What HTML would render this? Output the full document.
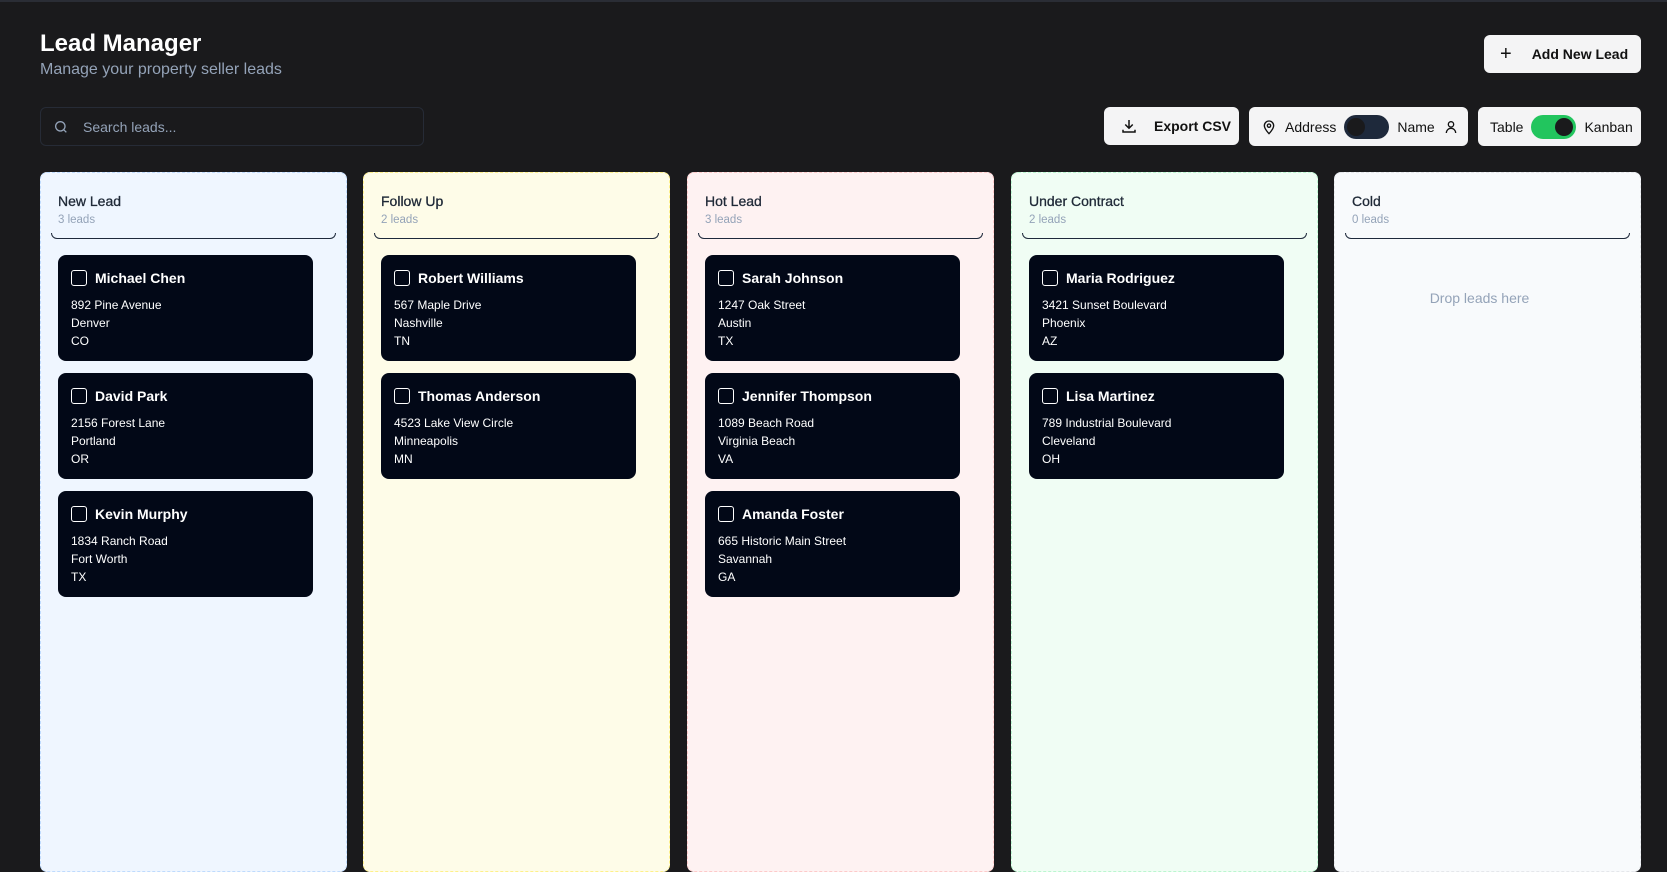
<!DOCTYPE html>
<html><head><meta charset="utf-8"><style>
*{box-sizing:border-box;margin:0;padding:0}
body{width:1667px;height:815px;overflow:hidden;background:#1a1a1c;font-family:"Liberation Sans",sans-serif;position:relative}
.topline{position:absolute;left:0;right:0;top:0;height:2px;background:#2a2d35}
h1{position:absolute;left:40px;top:30px;font-size:24px;color:#fff;font-weight:bold}
.sub{position:absolute;left:40px;top:61px;font-size:16px;color:#94a3b8}
.btn{position:absolute;background:#f4f4f5;border-radius:6px;display:flex;align-items:center;font-size:14px;color:#111}
.search{position:absolute;left:40px;top:107px;width:384px;height:39px;border:1px solid #262b36;border-radius:6px;display:flex;align-items:center;color:#94a3b8;font-size:14px}
.col{position:absolute;top:172px;width:307px;height:700px;border:1px dashed;border-radius:7px}
.ch{position:absolute;left:17px;top:20px;font-size:14px;color:#1f2937;-webkit-text-stroke:0.3px #1f2937}
.cc{position:absolute;left:17px;top:41px;font-size:11.5px;color:#94a3b8}
.dv{position:absolute;left:10px;right:10px;top:52px;height:14px;border-bottom:1px solid #1e293b;border-left:1px solid #1e293b;border-right:1px solid #1e293b;border-radius:0 0 6px 6px;border-top:none;clip-path:inset(8px 0 0 0)}
.card{position:absolute;left:17px;width:255px;height:106px;background:#020817;border-radius:8px;color:#fff}
.cb{position:absolute;left:13px;top:15px;width:16px;height:16px;border:1.5px solid #fff;border-radius:3px}
.nm{position:absolute;left:37px;top:15px;font-size:14px;font-weight:bold}
.ad{position:absolute;left:13px;top:41px;font-size:12px;line-height:18px}
.tg{display:inline-block;width:45px;height:24px;border-radius:12px;position:relative;margin:0 8px}
.tg i{position:absolute;top:3px;width:18px;height:18px;border-radius:50%;background:#1a1a1c}
</style></head><body>
<div class="topline"></div>
<h1>Lead Manager</h1>
<div class="sub">Manage your property seller leads</div>
<div class="btn" style="left:1484px;top:35px;width:157px;height:38px;font-weight:bold;padding-left:16px"><span style="font-size:20px;font-weight:normal;margin-right:20px">+</span>Add New Lead</div>
<div class="search"><svg width="16" height="16" viewBox="0 0 24 24" fill="none" stroke="#94a3b8" stroke-width="2" style="margin:0 14px 0 12px"><circle cx="11" cy="11" r="7"/><path d="M20 20l-4-4"/></svg>Search leads...</div>
<div class="btn" style="left:1104px;top:107px;width:135px;height:38px;font-weight:bold;padding-left:16px"><svg width="18" height="18" viewBox="0 0 24 24" fill="none" stroke="#111" stroke-width="2" style="margin-right:16px"><path d="M12 4v11M7 10l5 5 5-5M4 17v3h16v-3"/></svg>Export CSV</div>
<div class="btn" style="left:1249px;top:107px;width:219px;height:39px;padding-left:12px"><svg width="16" height="16" viewBox="0 0 24 24" fill="none" stroke="#111" stroke-width="2" style="margin-right:8px"><path d="M12 22s7-7 7-12a7 7 0 0 0-14 0c0 5 7 12 7 12z"/><circle cx="12" cy="10" r="2.5"/></svg>Address<span class="tg" style="background:#1e293b"><i style="left:3px"></i></span>Name<svg width="16" height="16" viewBox="0 0 24 24" fill="none" stroke="#111" stroke-width="2" style="margin-left:8px"><circle cx="12" cy="8" r="4"/><path d="M5 21a7 7 0 0 1 14 0"/></svg></div>
<div class="btn" style="left:1478px;top:107px;width:163px;height:39px;padding-left:12px">Table<span class="tg" style="background:#22c55e"><i style="right:3px"></i></span>Kanban</div>

<div class="col" style="left:40px;background:#eff6ff;border-color:#bfdbfe">
<div class="ch">New Lead</div><div class="cc">3 leads</div><div class="dv"></div>
<div class="card" style="top:82px"><div class="cb"></div><div class="nm">Michael Chen</div><div class="ad">892 Pine Avenue<br>Denver<br>CO</div></div>
<div class="card" style="top:200px"><div class="cb"></div><div class="nm">David Park</div><div class="ad">2156 Forest Lane<br>Portland<br>OR</div></div>
<div class="card" style="top:318px"><div class="cb"></div><div class="nm">Kevin Murphy</div><div class="ad">1834 Ranch Road<br>Fort Worth<br>TX</div></div>
</div>
<div class="col" style="left:363px;background:#fefce8;border-color:#fef08a">
<div class="ch">Follow Up</div><div class="cc">2 leads</div><div class="dv"></div>
<div class="card" style="top:82px"><div class="cb"></div><div class="nm">Robert Williams</div><div class="ad">567 Maple Drive<br>Nashville<br>TN</div></div>
<div class="card" style="top:200px"><div class="cb"></div><div class="nm">Thomas Anderson</div><div class="ad">4523 Lake View Circle<br>Minneapolis<br>MN</div></div>
</div>
<div class="col" style="left:687px;background:#fef2f2;border-color:#fecaca">
<div class="ch">Hot Lead</div><div class="cc">3 leads</div><div class="dv"></div>
<div class="card" style="top:82px"><div class="cb"></div><div class="nm">Sarah Johnson</div><div class="ad">1247 Oak Street<br>Austin<br>TX</div></div>
<div class="card" style="top:200px"><div class="cb"></div><div class="nm">Jennifer Thompson</div><div class="ad">1089 Beach Road<br>Virginia Beach<br>VA</div></div>
<div class="card" style="top:318px"><div class="cb"></div><div class="nm">Amanda Foster</div><div class="ad">665 Historic Main Street<br>Savannah<br>GA</div></div>
</div>
<div class="col" style="left:1011px;background:#f0fdf4;border-color:#bbf7d0">
<div class="ch">Under Contract</div><div class="cc">2 leads</div><div class="dv"></div>
<div class="card" style="top:82px"><div class="cb"></div><div class="nm">Maria Rodriguez</div><div class="ad">3421 Sunset Boulevard<br>Phoenix<br>AZ</div></div>
<div class="card" style="top:200px"><div class="cb"></div><div class="nm">Lisa Martinez</div><div class="ad">789 Industrial Boulevard<br>Cleveland<br>OH</div></div>
</div>
<div class="col" style="left:1334px;background:#f8fafc;border-color:#e5e7eb">
<div class="ch">Cold</div><div class="cc">0 leads</div><div class="dv"></div>
<div style="position:absolute;left:0;right:16px;top:117px;text-align:center;font-size:14px;color:#94a3b8">Drop leads here</div>
</div>
</body></html>
